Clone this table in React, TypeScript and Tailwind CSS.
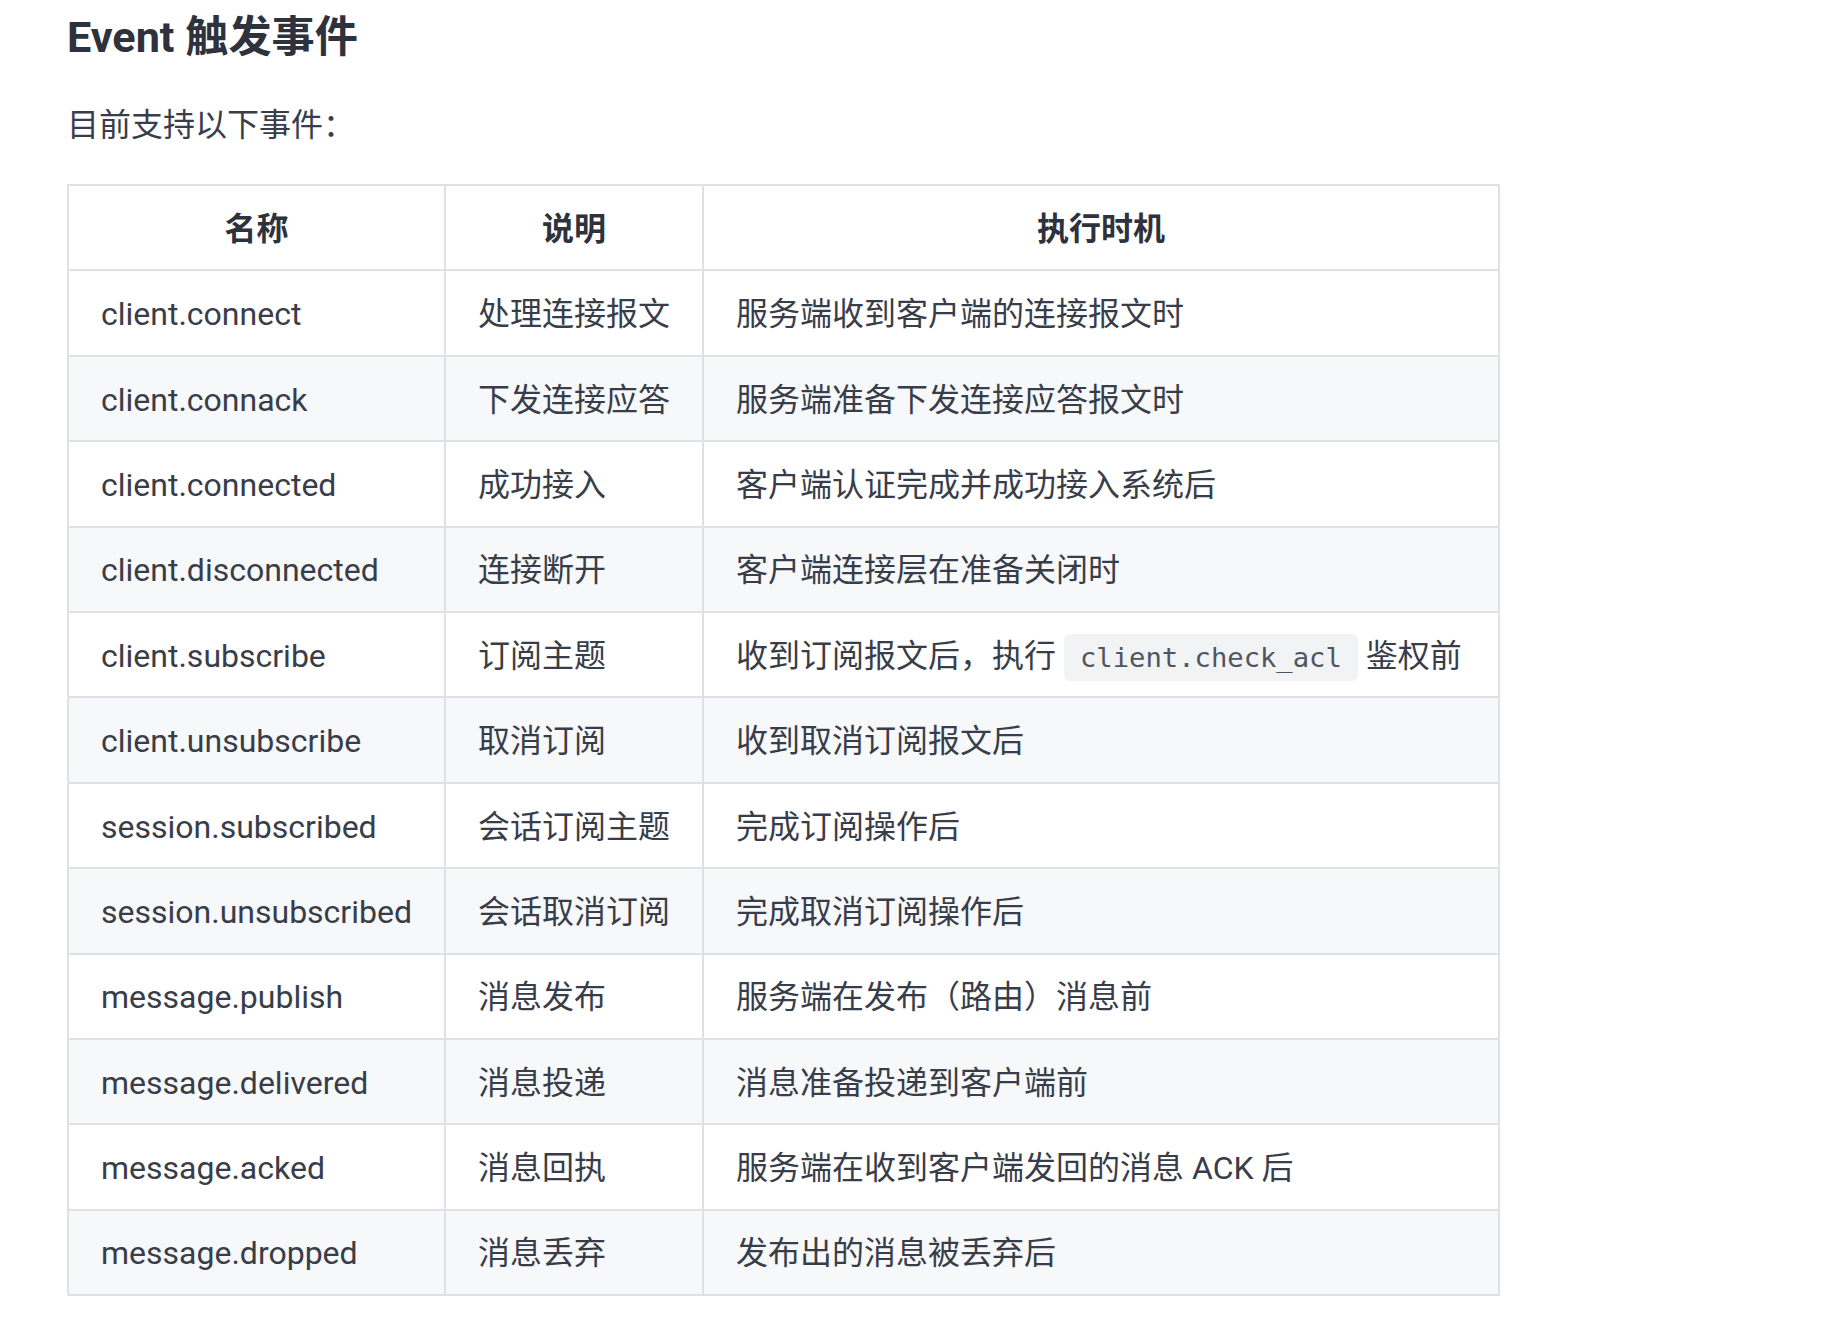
const rows: [string, string, React.ReactNode][] = [
  ['client.connect', '处理连接报文', '服务端收到客户端的连接报文时'],
  ['client.connack', '下发连接应答', '服务端准备下发连接应答报文时'],
  ['client.connected', '成功接入', '客户端认证完成并成功接入系统后'],
  ['client.disconnected', '连接断开', '客户端连接层在准备关闭时'],
  [
    'client.subscribe',
    '订阅主题',
    <>
      收到订阅报文后，执行{' '}
      <code className="rounded-[6px] bg-[#f2f3f4] px-[16px] py-[8px] font-['DejaVu_Sans_Mono',monospace] text-[27.2px] leading-none text-[#50555f]">
        client.check_acl
      </code>{' '}
      鉴权前
    </>,
  ],
  ['client.unsubscribe', '取消订阅', '收到取消订阅报文后'],
  ['session.subscribed', '会话订阅主题', '完成订阅操作后'],
  ['session.unsubscribed', '会话取消订阅', '完成取消订阅操作后'],
  ['message.publish', '消息发布', '服务端在发布（路由）消息前'],
  ['message.delivered', '消息投递', '消息准备投递到客户端前'],
  ['message.acked', '消息回执', '服务端在收到客户端发回的消息 ACK 后'],
  ['message.dropped', '消息丢弃', '发布出的消息被丢弃后'],
];

const cell = 'whitespace-nowrap border-2 border-[#dfe2e5] px-8 pt-[20.8px] pb-[17.8px]';

export default function App() {
  return (
    <div className="min-h-screen bg-white pl-[67px] pt-[12px] font-[Roboto,'Noto_Sans_CJK_SC',sans-serif] text-[#383d49]">
      {/* Heading */}
      <h3 className="text-[43.2px] font-bold leading-[52px] text-[#2e323c]">Event 触发事件</h3>
      <p className="mt-[34px] text-[32px] leading-[54px]">目前支持以下事件：</p>

      {/* Events table */}
      <table className="mt-[32px] w-[1431px] table-fixed border-collapse text-[32px] leading-[1.4]">
        <colgroup>
          <col className="w-[377px]" />
          <col className="w-[258px]" />
          <col className="w-[796px]" />
        </colgroup>
        <thead>
          <tr>
            <th className={`${cell} text-center font-bold text-[#2e323c]`}>名称</th>
            <th className={`${cell} text-center font-bold text-[#2e323c]`}>说明</th>
            <th className={`${cell} text-center font-bold text-[#2e323c]`}>执行时机</th>
          </tr>
        </thead>
        <tbody>
          {rows.map(([name, desc, when]) => (
            <tr key={name} className="even:bg-[#f6f8fa]">
              <td className={cell}>{name}</td>
              <td className={cell}>{desc}</td>
              <td className={cell}>{when}</td>
            </tr>
          ))}
        </tbody>
      </table>
    </div>
  );
}
